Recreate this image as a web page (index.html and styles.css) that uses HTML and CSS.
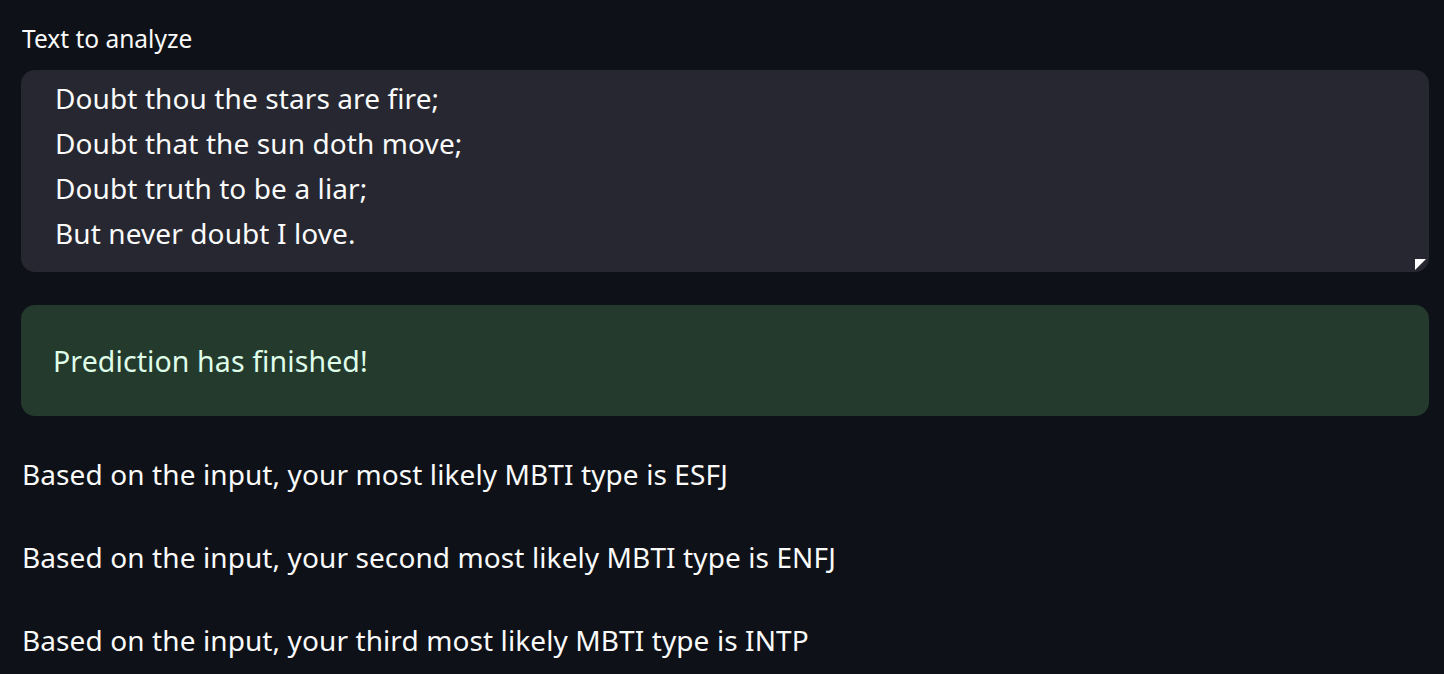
FILE: index.html
```html
<!DOCTYPE html>
<html>
<head>
<meta charset="utf-8">
<link rel="stylesheet" href="styles.css">
</head>
<body>
<main class="page">
  <div class="field">
    <div class="label">Text to analyze</div>
    <div class="textarea">
      <div class="line">Doubt thou the stars are fire;</div>
      <div class="line">Doubt that the sun doth move;</div>
      <div class="line">Doubt truth to be a liar;</div>
      <div class="line">But never doubt I love.</div>
      <span class="grip"></span>
    </div>
  </div>
  <div class="alert">Prediction has finished!</div>
  <p class="result">Based on the input, your most likely MBTI type is ESFJ</p>
  <p class="result">Based on the input, your second most likely MBTI type is ENFJ</p>
  <p class="result">Based on the input, your third most likely MBTI type is INTP</p>
</main>
</body>
</html>
```

FILE: styles.css
```css
html, body {
  margin: 0;
  padding: 0;
  background: #0e1117;
  height: 100%;
  overflow: hidden;
}
body {
  font-family: "Noto Sans", "Open Sans", sans-serif;
  color: #fafafa;
  letter-spacing: 0.1px;
}
.page {
  padding: 24px 15px 0 21px;
  display: flex;
  flex-direction: column;
}
.field {
  display: flex;
  flex-direction: column;
  gap: 16px;
}
.label {
  font-size: 24.5px;
  line-height: 30px;
  padding-left: 1px;
  letter-spacing: 0;
}
.textarea {
  position: relative;
  background: #262730;
  border-radius: 14px;
  height: 202px;
  box-sizing: border-box;
  padding: 6px 34px 0 34px;
  font-size: 28px;
  line-height: 45px;
}
.grip {
  position: absolute;
  right: 3px;
  bottom: 2px;
  width: 11px;
  height: 11px;
  background: #ffffff;
  clip-path: polygon(0 0, 100% 0, 0 100%);
}
.alert {
  margin-top: 33px;
  background: #233a2d;
  border-radius: 14px;
  height: 111px;
  box-sizing: border-box;
  padding: 0 32px;
  display: flex;
  align-items: center;
  font-size: 28.5px;
  color: #dffde9;
}
.result {
  margin: 0;
  font-size: 28px;
  line-height: 40px;
  margin-top: 38px;
  padding-left: 1px;
}
.result + .result {
  margin-top: 43px;
}
```
